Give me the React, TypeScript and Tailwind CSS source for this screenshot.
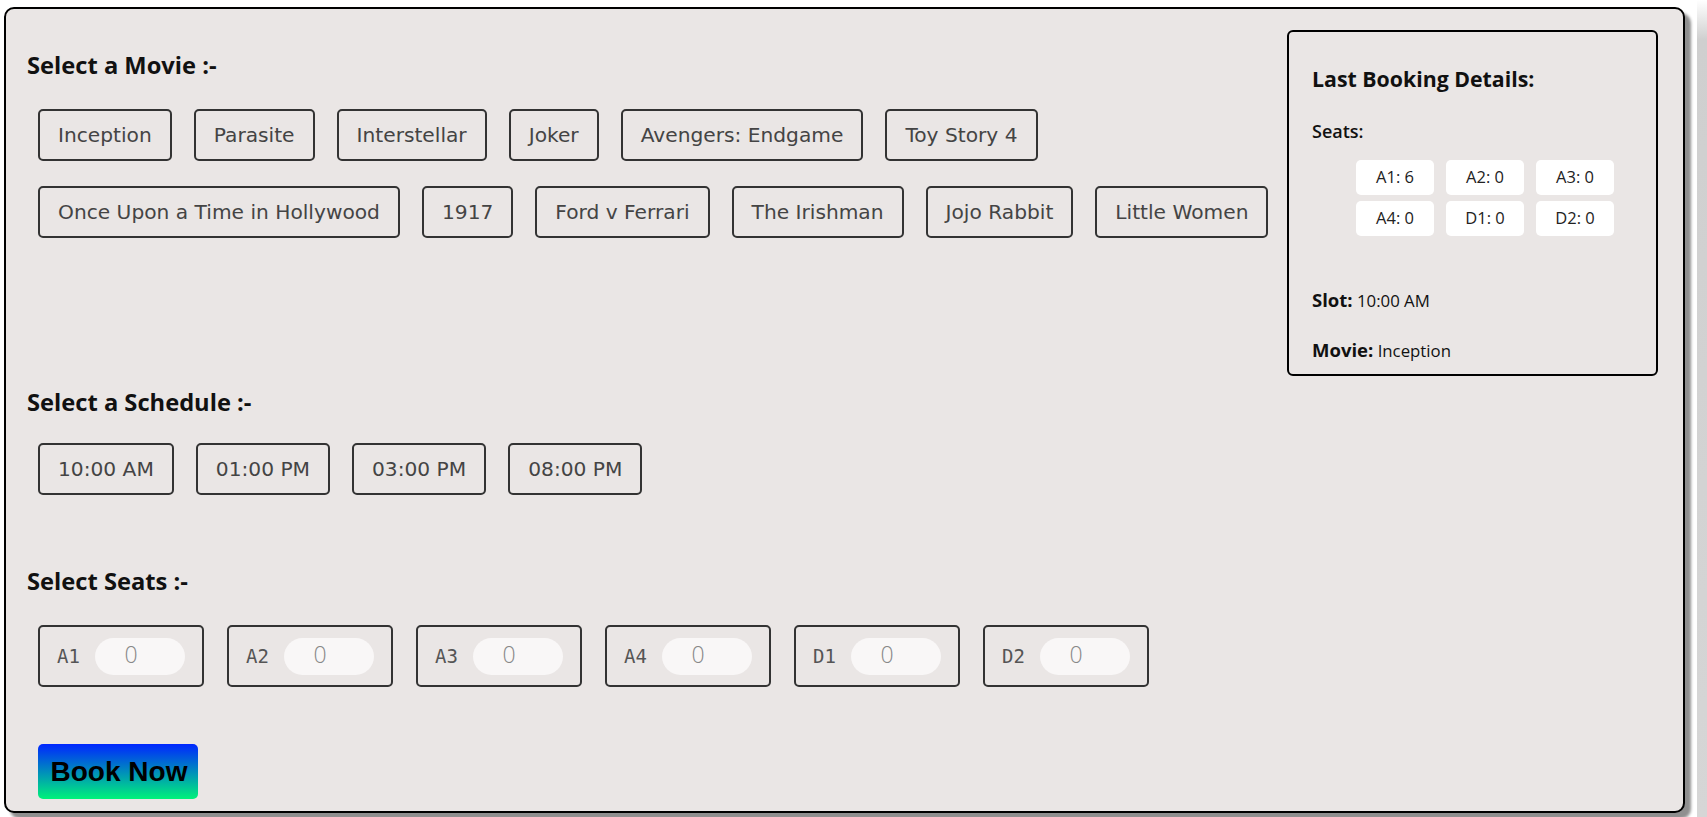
import { useState } from "react";

const MOVIES = [
  "Inception",
  "Parasite",
  "Interstellar",
  "Joker",
  "Avengers: Endgame",
  "Toy Story 4",
  "Once Upon a Time in Hollywood",
  "1917",
  "Ford v Ferrari",
  "The Irishman",
  "Jojo Rabbit",
  "Little Women",
];

const SLOTS = ["10:00 AM", "01:00 PM", "03:00 PM", "08:00 PM"];

const SEATS = ["A1", "A2", "A3", "A4", "D1", "D2"];

const LAST_BOOKING = {
  seats: { A1: 6, A2: 0, A3: 0, A4: 0, D1: 0, D2: 0 } as Record<string, number>,
  slot: "10:00 AM",
  movie: "Inception",
};

function SectionTitle({ children }: { children: React.ReactNode }) {
  return (
    <h3 className="h-[34px] leading-[34px] text-[23.7px] font-bold text-[#111] font-['Open_Sans',sans-serif]">
      {children}
    </h3>
  );
}

function OptionButton({ label, onClick }: { label: string; onClick: () => void }) {
  return (
    <button
      type="button"
      onClick={onClick}
      className="h-[52px] px-[18px] inline-flex items-center border-2 border-[#333] rounded-[5px] text-[20.2px] text-[#444] font-['DejaVu_Sans',sans-serif] whitespace-nowrap"
    >
      {label}
    </button>
  );
}

function SeatInput({
  seat,
  value,
}: {
  seat: string;
  value: number;
}) {
  return (
    <div className="w-[166px] h-[62px] border-2 border-[#333] rounded-[5px] flex items-center pl-[17px]">
      <span className="w-[24px] text-[19px] text-[#555] font-['DejaVu_Sans_Mono',monospace]">
        {seat}
      </span>
      <div className="ml-[14px] w-[90px] h-[37px] rounded-full bg-[#f9f7f7] flex items-center justify-center pr-[18px] pb-[4px] text-[23px] text-[#888] font-['Open_Sans',sans-serif] font-light">
        {value}
      </div>
    </div>
  );
}

function LastBooking() {
  return (
    <div className="w-[371px] h-[346px] mr-[4px] shrink-0 border-2 border-black rounded-[6px] pl-[23px] pt-[32px] font-['Open_Sans',sans-serif] text-[#111]">
      <h3 className="h-[30px] leading-[30px] text-[21.3px] font-bold">
        Last Booking Details:
      </h3>
      <p className="mt-[25px] h-[24px] leading-[24px] text-[18px] font-semibold">
        Seats:
      </p>
      <div className="mt-[17px] ml-[44px] grid grid-cols-[78px_78px_78px] gap-x-[12px] gap-y-[6px]">
        {SEATS.map((s) => (
          <div
            key={s}
            className="h-[35px] rounded-[5px] bg-white flex items-center justify-center text-[16.5px] text-[#222]"
          >
            {s}: {LAST_BOOKING.seats[s]}
          </div>
        ))}
      </div>
      <p className="mt-[52px] h-[24px] leading-[24px] text-[16.8px]">
        <span className="text-[18.5px] font-bold">Slot:</span> {LAST_BOOKING.slot}
      </p>
      <p className="mt-[26px] h-[24px] leading-[24px] text-[16.8px]">
        <span className="text-[18.5px] font-bold">Movie:</span> {LAST_BOOKING.movie}
      </p>
    </div>
  );
}

export default function App() {
  const [movie, setMovie] = useState("");
  const [slot, setSlot] = useState("");
  const [seats] = useState<Record<string, number>>({
    A1: 0,
    A2: 0,
    A3: 0,
    A4: 0,
    D1: 0,
    D2: 0,
  });

  return (
    <div className="w-full h-[817px] bg-white flex overflow-hidden">
      <div className="ml-[4px] mt-[7px] w-[1681px] h-[806px] shrink-0 bg-[#eae6e5] border-2 border-black rounded-[10px] shadow-[6px_6px_3px_#8f8f8f] px-[21px]">
        {/* top row: movie list + last booking */}
        <div className="flex items-start pt-[21px]" data-movie={movie} data-slot={slot}>
          <section className="flex-1 pt-[18px]">
            <SectionTitle>Select a Movie :-</SectionTitle>
            <div className="mt-[27px] pl-[11px] flex flex-wrap gap-x-[22px] gap-y-[25px]">
              {MOVIES.map((m) => (
                <OptionButton key={m} label={m} onClick={() => setMovie(m)} />
              ))}
            </div>
          </section>
          <LastBooking />
        </div>

        <section className="mt-[9px]">
          <SectionTitle>Select a Schedule :-</SectionTitle>
          <div className="mt-[24px] pl-[11px] flex gap-[22px]">
            {SLOTS.map((s) => (
              <OptionButton key={s} label={s} onClick={() => setSlot(s)} />
            ))}
          </div>
        </section>

        <section className="mt-[69px]">
          <SectionTitle>Select Seats :-</SectionTitle>
          <div className="mt-[27px] pl-[11px] flex gap-[23px]">
            {SEATS.map((s) => (
              <SeatInput key={s} seat={s} value={seats[s]} />
            ))}
          </div>
        </section>

        <button
          type="button"
          className="mt-[57px] ml-[11px] w-[160px] h-[55px] rounded-[5px] bg-[linear-gradient(to_bottom,#0026ff,#00f27a)] text-[28px] font-bold text-black font-['Liberation_Sans',Arial,sans-serif] pl-[2px]"
        >
          Book Now
        </button>
      </div>
      <div className="ml-auto w-[10px] h-full bg-[linear-gradient(to_bottom,#ffffff,#cfcfcf_40px,#d6d6d6)]" />
    </div>
  );
}
